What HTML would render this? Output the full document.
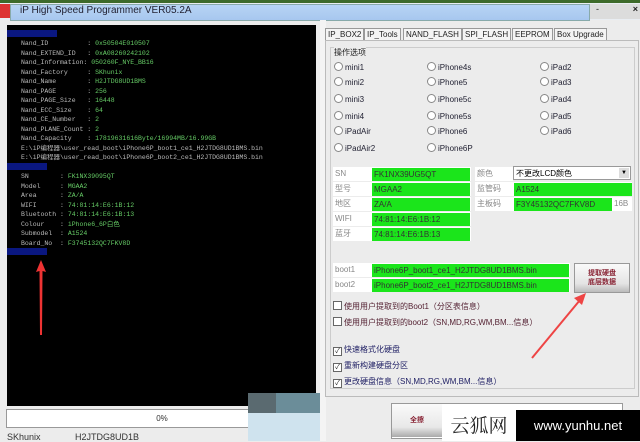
<!DOCTYPE html><html><head><meta charset="utf-8"><style>
body{margin:0;width:640px;height:441px;overflow:hidden;background:#ececec;position:relative;font-family:"Liberation Sans","Noto Sans CJK SC",sans-serif}
.a{position:absolute}
.con{left:7px;top:25px;width:309px;height:381px;background:#000;font-family:"Liberation Mono","Noto Sans CJK SC",monospace;font-size:6.5px;color:#bbb}
.con div{position:absolute;left:14px;white-space:pre;line-height:9px}
.g{color:#6c6}
.h{background:#0a1780;color:#3050ff;left:0!important;width:50px;height:7px}
.r{font-size:8px;color:#223;position:absolute}
.r:before{content:"";display:inline-block;width:7px;height:7px;border:1px solid #888;border-radius:50%;background:#fff;margin-right:2px;vertical-align:-1px}
.lb{position:absolute;background:#fff;color:#888;font-size:8px;height:14px;line-height:14px;padding-left:2px;box-sizing:border-box}
.gr{position:absolute;background:#1be51b;color:#333;font-size:8px;height:13px;line-height:13px;padding-left:2px;box-sizing:border-box}
.cb{position:absolute;font-size:8px;color:#523}
.cb:before{content:"";display:inline-block;width:7px;height:7px;border:1px solid #666;background:#fff;margin-right:2px;vertical-align:-1px;font-size:7px;line-height:7px;text-align:center;color:#222}
.ck:before{content:"✓"}
.tab{position:absolute;top:28px;height:11px;border:1px solid #999;background:#f4f4f4;font-size:8px;line-height:11px;padding:0 2px;color:#222}
</style></head><body>
<div class="a" style="left:0;top:0;width:640px;height:3px;background:#3d6a2a"></div>
<div class="a" style="left:0;top:3px;width:640px;height:17px;background:#e9edf2"></div>
<div class="a" style="left:10px;top:4px;width:578px;height:15px;background:linear-gradient(#b7d4f4,#a7c7ef);border:1px solid #8aa"></div>
<div class="a" style="left:0;top:4px;width:10px;height:14px;background:#d33"></div>
<div class="a" style="left:20px;top:5px;font-size:10px;color:#223">iP High Speed Programmer VER05.2A</div>
<div class="a" style="left:590px;top:4px;width:50px;height:15px;background:#dcdcdc;font-size:9px;color:#222"><span style="position:absolute;left:6px">-</span><span style="position:absolute;right:2px;font-weight:bold">×</span></div>
<div class="a con">
<div class="h" style="top:5px"></div>
<div style="top:14px">Nand_ID          : <span class="g">0x50504E010507</span></div>
<div style="top:23.5px">Nand_EXTEND_ID   : <span class="g">0xA08260242102</span></div>
<div style="top:33px">Nand_Information: <span class="g">050260F_NYE_BB16</span></div>
<div style="top:42.5px">Nand_Factory     : <span class="g">SKhunix</span></div>
<div style="top:52px">Nand_Name        : <span class="g">H2JTDG8UD1BMS</span></div>
<div style="top:61.5px">Nand_PAGE        : <span class="g">256</span></div>
<div style="top:71px">Nand_PAGE_Size   : <span class="g">16448</span></div>
<div style="top:80.5px">Nand_ECC_Size    : <span class="g">64</span></div>
<div style="top:90px">Nand_CE_Number   : <span class="g">2</span></div>
<div style="top:99.5px">Nand_PLANE_Count : <span class="g">2</span></div>
<div style="top:109px">Nand_Capacity    : <span class="g">17819631616Byte/16994MB/16.99GB</span></div>
<div style="top:118.5px">E:\iP编程器\user_read_boot\iPhone6P_boot1_ce1_H2JTDG8UD1BMS.bin</div>
<div style="top:128px">E:\iP编程器\user_read_boot\iPhone6P_boot2_ce1_H2JTDG8UD1BMS.bin</div>
<div class="h" style="top:138px;width:40px"></div>
<div style="top:147px">SN        : <span class="g">FK1NX39095QT</span></div>
<div style="top:156.5px">Model     : <span class="g">MGAA2</span></div>
<div style="top:166px">Area      : <span class="g">ZA/A</span></div>
<div style="top:175.5px">WIFI      : <span class="g">74:81:14:E6:1B:12</span></div>
<div style="top:185px">Bluetooth : <span class="g">74:81:14:E6:1B:13</span></div>
<div style="top:194.5px">Colour    : <span class="g">iPhone6_6P白色</span></div>
<div style="top:204px">Submodel  : <span class="g">A1524</span></div>
<div style="top:213.5px">Board_No  : <span class="g">F3745132QC7FKV8D</span></div>
<div class="h" style="top:223px;width:40px"></div>
<svg class="a" style="left:28px;top:235px" width="12" height="80"><path d="M6 0 L1 12 L4.5 11 L5 75 L7 75 L7.5 11 L11 12 Z" fill="#e33"/></svg>
</div>
<div class="a" style="left:6px;top:409px;width:310px;height:17px;background:#fff;border:1px solid #999;font-size:8px;text-align:center;line-height:17px;color:#333">0%</div>
<div class="a" style="left:7px;top:432px;font-size:9px;color:#333">SKhunix</div>
<div class="a" style="left:75px;top:432px;font-size:9px;color:#333">H2JTDG8UD1B</div>
<div class="a" style="left:248px;top:393px;width:28px;height:20px;background:#5a6a70"></div>
<div class="a" style="left:276px;top:393px;width:44px;height:20px;background:#6b8d99"></div>
<div class="a" style="left:248px;top:413px;width:72px;height:28px;background:#cfe3ee"></div>
<div class="a" style="left:320px;top:20px;width:6px;height:421px;background:#f4f4f4"></div>
<div class="tab" style="left:325px">IP_BOX2</div>
<div class="tab" style="left:364px">IP_Tools</div>
<div class="tab" style="left:403px">NAND_FLASH</div>
<div class="tab" style="left:462px">SPI_FLASH</div>
<div class="tab" style="left:512px">EEPROM</div>
<div class="tab" style="left:554px">Box Upgrade</div>
<div class="a" style="left:325px;top:40px;width:312px;height:355px;border:1px solid #bbb"></div>
<div class="a" style="left:330px;top:47px;width:303px;height:340px;border:1px solid #ccc"></div>
<div class="a" style="left:334px;top:47px;font-size:8px;color:#222;background:#ececec">操作选项</div>
<div class="r" style="left:334px;top:62px">mini1</div><div class="r" style="left:427px;top:62px">iPhone4s</div><div class="r" style="left:540px;top:62px">iPad2</div>
<div class="r" style="left:334px;top:77px">mini2</div><div class="r" style="left:427px;top:77px">iPhone5</div><div class="r" style="left:540px;top:77px">iPad3</div>
<div class="r" style="left:334px;top:94px">mini3</div><div class="r" style="left:427px;top:94px">iPhone5c</div><div class="r" style="left:540px;top:94px">iPad4</div>
<div class="r" style="left:334px;top:111px">mini4</div><div class="r" style="left:427px;top:111px">iPhone5s</div><div class="r" style="left:540px;top:111px">iPad5</div>
<div class="r" style="left:334px;top:126px">iPadAir</div><div class="r" style="left:427px;top:126px">iPhone6</div><div class="r" style="left:540px;top:126px">iPad6</div>
<div class="r" style="left:334px;top:143px">iPadAir2</div><div class="r" style="left:427px;top:143px">iPhone6P</div>
<div class="lb" style="left:333px;top:167px;width:138px">SN</div><div class="gr" style="left:372px;top:168px;width:98px">FK1NX39UG5QT</div>
<div class="lb" style="left:333px;top:182px;width:138px">型号</div><div class="gr" style="left:372px;top:183px;width:98px">MGAA2</div>
<div class="lb" style="left:333px;top:197px;width:138px">地区</div><div class="gr" style="left:372px;top:198px;width:98px">ZA/A</div>
<div class="lb" style="left:333px;top:212px;width:138px">WIFI</div><div class="gr" style="left:372px;top:213px;width:98px">74:81:14:E6:1B:12</div>
<div class="lb" style="left:333px;top:227px;width:138px">蓝牙</div><div class="gr" style="left:372px;top:228px;width:98px">74:81:14:E6:1B:13</div>
<div class="lb" style="left:475px;top:167px;width:38px">颜色</div>
<div class="a" style="left:513px;top:166px;width:118px;height:14px;background:#fff;border:1px solid #999;font-size:8px;line-height:14px;padding-left:2px;box-sizing:border-box">不更改LCD颜色<span style="position:absolute;right:1px;top:1px;width:10px;height:10px;background:#ddd;font-size:6px;text-align:center;line-height:10px">▼</span></div>
<div class="lb" style="left:475px;top:182px;width:157px">监管码</div><div class="gr" style="left:514px;top:183px;width:118px">A1524</div>
<div class="lb" style="left:475px;top:197px;width:157px">主板码</div><div class="gr" style="left:514px;top:198px;width:98px">F3Y45132QC7FKV8D</div><div class="a" style="left:614px;top:199px;font-size:8px;color:#888">16B</div>
<div class="lb" style="left:333px;top:263px;width:237px">boot1</div><div class="gr" style="left:372px;top:264px;width:197px">iPhone6P_boot1_ce1_H2JTDG8UD1BMS.bin</div>
<div class="lb" style="left:333px;top:278px;width:237px">boot2</div><div class="gr" style="left:372px;top:279px;width:197px">iPhone6P_boot2_ce1_H2JTDG8UD1BMS.bin</div>
<div class="a" style="left:574px;top:263px;width:56px;height:30px;background:linear-gradient(#fafafa,#e4e4e4 70%,#bbb);border:1px solid #999;font-size:7px;color:#823;text-align:center;line-height:9px;padding-top:5px;box-sizing:border-box;font-weight:bold">提取硬盘<br>底层数据</div>
<div class="cb" style="left:333px;top:301px">使用用户提取到的Boot1（分区表信息）</div>
<div class="cb" style="left:333px;top:317px">使用用户提取到的boot2（SN,MD,RG,WM,BM...信息）</div>
<div class="cb ck" style="left:333px;top:344px;color:#226">快速格式化硬盘</div>
<div class="cb ck" style="left:333px;top:360px;color:#226">重新构建硬盘分区</div>
<div class="cb ck" style="left:333px;top:376px;color:#226">更改硬盘信息（SN,MD,RG,WM,BM...信息）</div>
<svg class="a" style="left:530px;top:292px" width="60" height="68"><path d="M2 66 L50 8" stroke="#e44" stroke-width="2"/><path d="M56 1 L44 6 L52 13 Z" fill="#e44"/></svg>
<div class="a" style="left:391px;top:403px;width:230px;height:34px;background:#fff;border:1px solid #999"></div>
<div class="a" style="left:392px;top:404px;width:50px;height:33px;background:linear-gradient(#fafafa,#e8e8e8 70%,#aaa);font-size:7px;color:#823;line-height:33px;padding-left:18px;box-sizing:border-box;font-weight:bold">全擦</div>
<div class="a" style="left:442px;top:408px;width:74px;height:33px;background:#fff;font-size:19px;color:#222;line-height:33px;text-align:center;font-family:'Noto Serif CJK SC',serif">云狐网</div>
<div class="a" style="left:516px;top:410px;width:124px;height:31px;background:#000;color:#fff;font-size:13px;line-height:31px;text-align:center">www.yunhu.net</div>
</body></html>
